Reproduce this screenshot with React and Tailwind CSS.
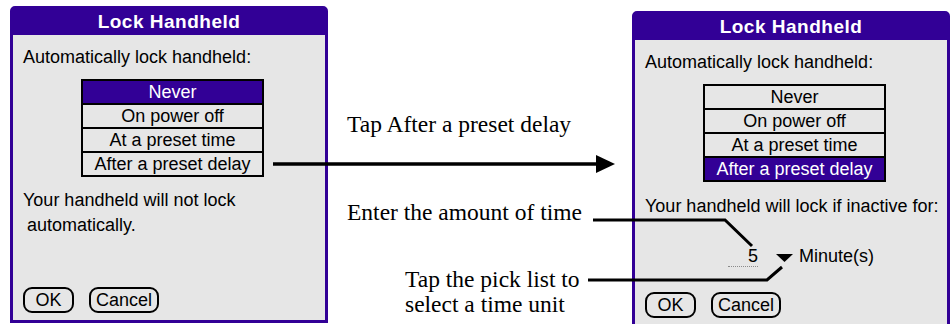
import React from 'react';

const options = ['Never', 'On power off', 'At a preset time', 'After a preset delay'];

function OptionList({ selected }) {
    return (
        <div className="ml-[58px] w-[183px] border-2 border-black flex flex-col">
            {options.map((label, i) => (
                <div
                    key={label}
                    className={`h-[22px] leading-[22px] text-center ${i > 0 ? 'border-t-2 border-black box-content' : ''} ${i === selected ? 'bg-[#320096] text-white' : ''}`}
                >
                    {label}
                </div>
            ))}
        </div>
    );
}

function Panel({ selected, className, children }) {
    return (
        <div className={`w-[318px] h-[317px] shrink-0 flex flex-col bg-[#e6e6e6] border-[3px] border-[#320096] rounded-t-[5px] font-['Liberation_Sans',Arial,sans-serif] text-[18px] text-black ${className}`}>
            <div className="h-[26px] bg-[#320096] text-white text-center font-bold text-[19px] leading-[26px] tracking-[0.5px]">
                Lock Handheld
            </div>
            <div className="flex flex-col flex-1 px-[10px] pb-[7px]">
                <div className="mt-[12px] leading-[20px]">Automatically lock handheld:</div>
                <div className="mt-[12px]">
                    <OptionList selected={selected} />
                </div>
                {children}
                <div className="mt-auto flex gap-[15px]">
                    <div className="w-[51px] h-[26px] border-2 border-black rounded-[9px] leading-[22px] text-center">OK</div>
                    <div className="w-[70px] h-[26px] border-2 border-black rounded-[9px] leading-[22px] text-center">Cancel</div>
                </div>
            </div>
        </div>
    );
}

export default function App() {
    return (
        <div className="relative w-[951px] h-[324px] overflow-hidden bg-white flex items-start">
            <Panel selected={0} className="ml-[10px] mt-[6px]">
                <div className="mt-[11px] leading-[25px]">
                    <div>Your handheld will not lock</div>
                    <div className="pl-[4px]">automatically.</div>
                </div>
            </Panel>

            <div className="w-[304px] shrink-0 flex flex-col pl-[19px] pt-[111px] font-['Liberation_Serif','Times_New_Roman',serif] text-[23.5px] text-black">
                <div className="leading-[26px] whitespace-nowrap">Tap After a preset delay</div>
                <div className="mt-[62px] leading-[26px] whitespace-nowrap">Enter the amount of time</div>
                <div className="mt-[42px] ml-[58px] leading-[25px] whitespace-nowrap">
                    <div>Tap the pick list to</div>
                    <div>select a time unit</div>
                </div>
            </div>

            <Panel selected={3} className="mt-[11px]">
                <div className="mt-[12px] leading-[25px] whitespace-nowrap">Your handheld will lock if inactive for:</div>
                <div className="mt-[27px] flex items-baseline leading-[20px]">
                    <span className="ml-[83px] w-[30px] h-[21px] text-right border-b border-dotted border-[#8a8a8a]">5</span>
                    <svg className="ml-[18px]" width="17" height="8" viewBox="0 0 17 8">
                        <polygon points="0,0 17,0 8.5,8" fill="black" />
                    </svg>
                    <span className="ml-[6px]">Minute(s)</span>
                </div>
            </Panel>

            <svg className="absolute inset-0 z-10 pointer-events-none" width="951" height="324" viewBox="0 0 951 324">
                <path d="M273 164 H600" stroke="black" strokeWidth="3.5" fill="none" />
                <polygon points="596,155 615,164 596,173" fill="black" />
                <path d="M593 220 H725 L752 246" stroke="black" strokeWidth="3" fill="none" />
                <path d="M588 280 H767 L782 267" stroke="black" strokeWidth="3" fill="none" />
            </svg>
        </div>
    );
}
